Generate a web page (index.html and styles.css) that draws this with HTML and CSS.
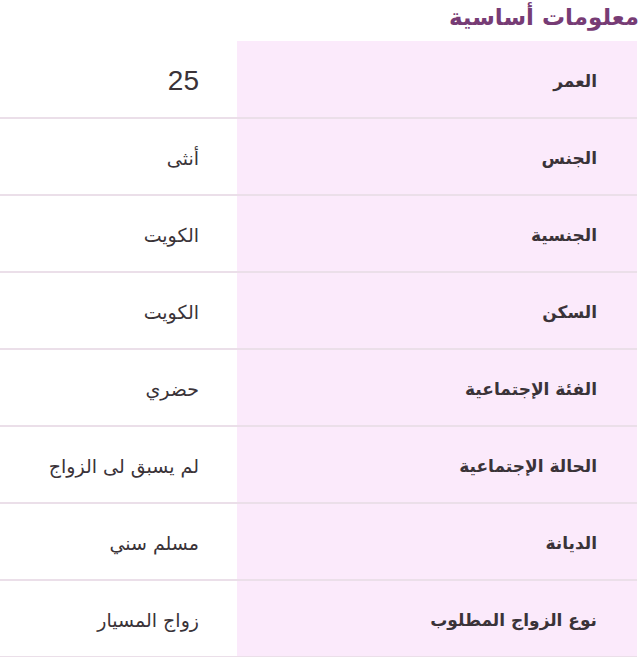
FILE: index.html
```html
<!DOCTYPE html>
<html lang="ar" dir="rtl">
<head>
<meta charset="utf-8">
<title>معلومات أساسية</title>
<link rel="stylesheet" href="styles.css">
</head>
<body>
<div class="page">
  <h2 class="title">معلومات أساسية</h2>
  <table class="info">
    <tbody>
      <tr><th>العمر</th><td><span class="num">25</span></td></tr>
      <tr><th>الجنس</th><td>أنثى</td></tr>
      <tr><th>الجنسية</th><td>الكويت</td></tr>
      <tr><th>السكن</th><td>الكويت</td></tr>
      <tr><th>الفئة الإجتماعية</th><td>حضري</td></tr>
      <tr><th>الحالة الإجتماعية</th><td>لم يسبق لى الزواج</td></tr>
      <tr><th>الديانة</th><td>مسلم سني</td></tr>
      <tr><th>نوع الزواج المطلوب</th><td>زواج المسيار</td></tr>
    </tbody>
  </table>
</div>
</body>
</html>
```
FILE: styles.css
```css
html, body {
  margin: 0;
  padding: 0;
  background: #ffffff;
  overflow: hidden;
}
.page {
  padding: 0 3px 0 0;
  font-family: "DejaVu Sans", "Liberation Sans", sans-serif;
  color: #3a3338;
}
.title {
  margin: 0 -2px 0 0;
  height: 41px;
  font-size: 23px;
  font-weight: bold;
  color: #773c75;
  line-height: 34px;
  text-align: right;
}
.info {
  width: 100%;
  border-collapse: collapse;
}
.info th,
.info td {
  box-sizing: border-box;
  height: 77px;
  padding: 3px 40px 0 0;
  border-bottom: 2px solid #ebdfe9;
  text-align: right;
  vertical-align: middle;
}
.info th {
  width: 400px;
  background: #fbeafb;
  font-weight: bold;
  font-size: 17px;
}
.info td {
  font-weight: normal;
  font-size: 19px;
  padding-right: 38px;
}
.num {
  font-family: "Liberation Sans", sans-serif;
  font-size: 28px;
}
```
